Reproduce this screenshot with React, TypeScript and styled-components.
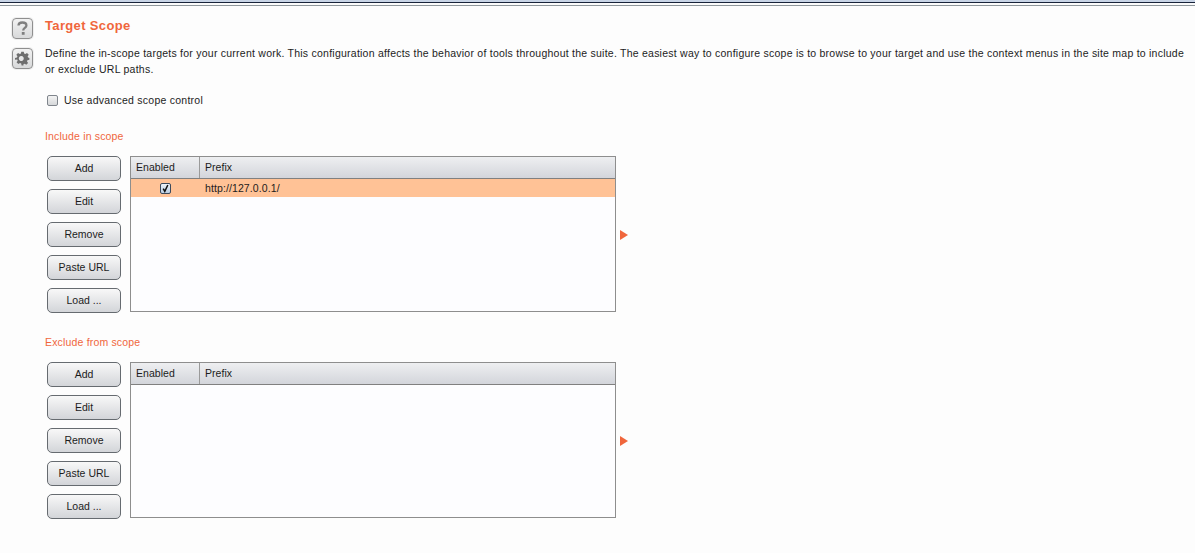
import React from 'react'
import styled, { createGlobalStyle } from 'styled-components'

const GlobalStyle = createGlobalStyle`
  html, body {
    margin: 0;
    padding: 0;
    background: #fdfdfd;
  }
  body {
    font-family: "Liberation Sans", Arial, sans-serif;
    font-size: 11px;
    color: #1c1c1c;
  }
`

const Page = styled.div`
  width: 1195px;
  height: 553px;
  overflow: hidden;
  background: #fdfdfd;
`

const TopRule = styled.div`
  height: 6px;
  background: linear-gradient(
    #c8d4e6 0 2px,
    #18233a 2px 3px,
    #fbfbfb 3px 5px,
    #8f979c 5px 6px
  );
`

const Body = styled.div`
  display: flex;
  padding: 12px 0 0 12px;
`

const IconColumn = styled.div`
  display: flex;
  flex-direction: column;
  gap: 9px;
  width: 33px;
  flex: none;
`

const IconButton = styled.div`
  width: 21px;
  height: 21px;
  display: flex;
  align-items: center;
  justify-content: center;
  border: 1px solid #8f8f8f;
  border-radius: 4px;
  box-sizing: border-box;
  background: linear-gradient(#f2f2f2, #d8d9da);
  box-shadow: 0 0 0 1px #efefef;
`

const Content = styled.div`
  flex: 1;
  min-width: 0;
`

const Title = styled.h1`
  margin: 0;
  font-size: 13px;
  line-height: 16px;
  font-weight: bold;
  color: #f0663c;
  letter-spacing: 0.35px;
`

const Description = styled.p`
  margin: 11px 0 0;
  width: 1145px;
  font-size: 10.5px;
  line-height: 16px;
  color: #1c1c1c;
  letter-spacing: 0.24px;
`

const CheckRow = styled.label`
  display: flex;
  align-items: center;
  gap: 6px;
  margin: 16px 0 0 2px;
  height: 14px;
  font-size: 10.5px;
  letter-spacing: 0.25px;
`

const CheckBox = styled.span<{ $checked?: boolean }>`
  display: inline-flex;
  align-items: center;
  justify-content: center;
  width: 11px;
  height: 11px;
  box-sizing: border-box;
  flex: none;
  border: 1px solid ${(p) => (p.$checked ? '#3c4a5c' : '#7f858c')};
  border-radius: 2px;
  background: ${(p) =>
    p.$checked
      ? 'linear-gradient(#eef3f9, #b8cce2)'
      : 'linear-gradient(#f3f3f3, #d6d8da)'};
`

const ScopeTitle = styled.h2`
  margin: 0;
  height: 13px;
  font-size: 10.5px;
  line-height: 13px;
  font-weight: normal;
  color: #f0663c;
  letter-spacing: 0.17px;
`

const ScopeSection = styled.section<{ $top: number }>`
  margin-top: ${(p) => p.$top}px;
`

const ScopeRow = styled.div`
  display: flex;
  align-items: flex-start;
  margin: 13px 0 0 2px;
`

const ButtonColumn = styled.div`
  display: flex;
  flex-direction: column;
  gap: 8px;
  width: 83px;
  flex: none;
`

const ActionButton = styled.button`
  width: 74px;
  height: 25px;
  padding: 0 0 1px;
  box-sizing: border-box;
  border: 1px solid #666b70;
  border-radius: 5px;
  background: linear-gradient(#f8f8f8, #d3d5d9);
  font-family: inherit;
  font-size: 10.5px;
  letter-spacing: 0;
  color: #1c1c1c;
`

const Table = styled.div`
  width: 486px;
  height: 156px;
  box-sizing: border-box;
  border: 1px solid #8e8e8e;
  background: #fdfdff;
`

const HeaderRow = styled.div`
  display: grid;
  grid-template-columns: 68px 1fr;
  height: 22px;
  box-sizing: border-box;
  border-bottom: 1px solid #808080;
  background: linear-gradient(#eeeff1, #d3d5db);
`

const HeaderCell = styled.div`
  display: flex;
  align-items: center;
  padding: 0 0 1px 5px;
  font-size: 10.5px;
  letter-spacing: 0.05px;
  & + & {
    border-left: 1px solid #9a9a9a;
  }
`

const DataRow = styled.div`
  display: grid;
  grid-template-columns: 68px 1fr;
  height: 18px;
  background: #ffc296;
`

const CheckCell = styled.div`
  display: flex;
  align-items: center;
  justify-content: center;
  padding-left: 1px;
`

const PrefixCell = styled.div`
  display: flex;
  align-items: center;
  padding-left: 5px;
  margin-left: 1px;
  font-size: 10.5px;
  letter-spacing: 0.1px;
`

const ScopeArrow = styled.div`
  align-self: center;
  margin-left: 4px;
  width: 0;
  height: 0;
  border-style: solid;
  border-width: 5px 0 5px 8px;
  border-color: transparent transparent transparent #f0663c;
`

const actions = ['Add', 'Edit', 'Remove', 'Paste URL', 'Load ...']

function Scope({ title, top, rows }: { title: string; top: number; rows: string[] }) {
  return (
    <ScopeSection $top={top}>
      <ScopeTitle>{title}</ScopeTitle>
      <ScopeRow>
        <ButtonColumn>
          {actions.map((label) => (
            <ActionButton key={label}>{label}</ActionButton>
          ))}
        </ButtonColumn>
        <Table>
          <HeaderRow>
            <HeaderCell>Enabled</HeaderCell>
            <HeaderCell>Prefix</HeaderCell>
          </HeaderRow>
          {rows.map((row) => (
            <DataRow key={row}>
              <CheckCell>
                <CheckBox $checked>
                  <svg width="9" height="9" viewBox="0 0 9 9">
                    <path d="M2.2 4.6 L3.8 7.4 L6.8 1" fill="none" stroke="#111" strokeWidth="1.5" />
                  </svg>
                </CheckBox>
              </CheckCell>
              <PrefixCell>{row}</PrefixCell>
            </DataRow>
          ))}
        </Table>
        <ScopeArrow />
      </ScopeRow>
    </ScopeSection>
  )
}

export default function App() {
  return (
    <Page>
      <GlobalStyle />
      <TopRule />
      <Body>
        <IconColumn>
          <IconButton>
            <svg width="13" height="15" viewBox="0 0 13 15">
              <path
                d="M2.5 4.6 C2.5 2.4 4.2 1.5 6.4 1.5 C8.8 1.5 10.4 2.7 10.4 4.5 C10.4 6.9 7.2 6.9 7.2 9.4"
                fill="none"
                stroke="#7f7f7f"
                strokeWidth="2.3"
              />
              <rect x="5.8" y="11" width="2.8" height="2.8" fill="#7f7f7f" />
            </svg>
          </IconButton>
          <IconButton>
            <svg width="15" height="15" viewBox="0 0 24 24">
              <path
                fill="#6e6e6e"
                fillRule="evenodd"
                d="M10 1h4l.6 3.1 1.9.8 2.7-1.8 2.8 2.8-1.8 2.7.8 1.9L23 11v3l-3.1.6-.8 1.9 1.8 2.7-2.8 2.8-2.7-1.8-1.9.8L13.5 23h-3l-.6-3.1-1.9-.8-2.7 1.8-2.8-2.8 1.8-2.7-.8-1.9L0 14v-3l3.1-.6.8-1.9L2.1 5.8l2.8-2.8 2.7 1.8 1.9-.8L10 1zm2 7.5a4 4 0 1 0 0 7 4 4 0 0 0 0-7z"
              />
            </svg>
          </IconButton>
        </IconColumn>
        <Content>
          <Title>Target Scope</Title>
          <Description>
            Define the in-scope targets for your current work. This configuration affects the behavior of tools
            throughout the suite. The easiest way to configure scope is to browse to your target and use the context
            menus in the site map to include or exclude URL paths.
          </Description>
          <CheckRow>
            <CheckBox />
            Use advanced scope control
          </CheckRow>
          <Scope title="Include in scope" top={23} rows={['http://127.0.0.1/']} />
          <Scope title="Exclude from scope" top={23} rows={[]} />
        </Content>
      </Body>
    </Page>
  )
}
